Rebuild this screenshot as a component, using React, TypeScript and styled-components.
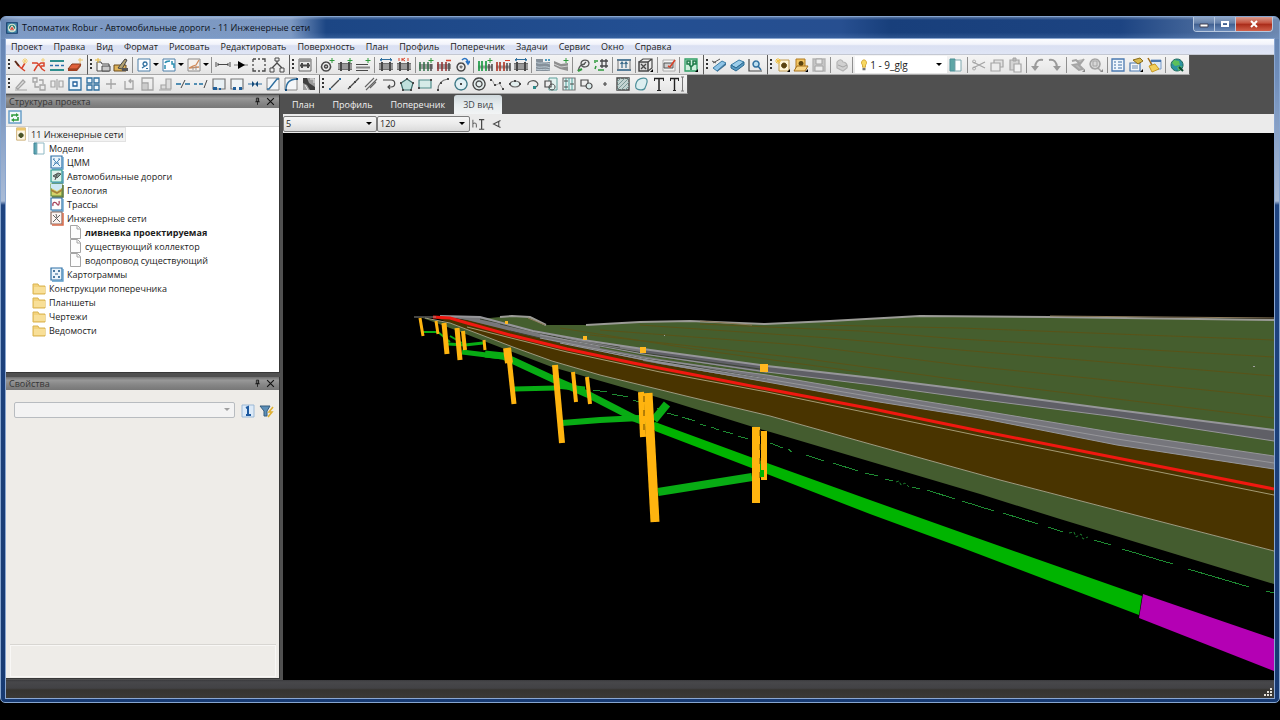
import React from 'react';
import styled, { createGlobalStyle } from 'styled-components';

const Global = createGlobalStyle`
  *, *::before, *::after { box-sizing: border-box; }
  html, body { margin: 0; background: #000; }
  body, button, select { font-family: "Open Sans", "Noto Sans", sans-serif; font-size: 9px; color: #1c1c1c; }
  button { border: 0; padding: 0; background: none; }
`;

/* ---------- icons: [path, stroke, fill, stroke width] on a 16px grid ---------- */

type Shape = [string, string?, string?, number?];

const K = '#484848';
const G = '#2f9a3c';
const B = '#2f6f9f';
const R = '#d8432a';
const D = '#a4a4a4';
const corner: Shape = ['M15 12v3h-3z', '', '#000'];
const gPlus: Shape = ['M13 1v5M10.5 3.5h5', G];
const road: Shape[] = [
  ['M1 7h14v5H1z', '', '#9a9a9a'],
  ['M1 6.5h14M1 12.5h14', '#707070'],
  ['M4 5v9M12 5v9', K, '', 2],
];

const icons: Record<string, Shape[]> = {
  surveyPoint: [['M4 7l4 4 4 3M9 11l3-5', R, '', 1.5], ['M2 4l4 5', '#5a2a1a', '', 2], ['M12 1v6M9 4h6M10 2l4 4M14 2l-4 4', '#f3d27a']],
  surveyLine: [['M1 6h5l3 3 2 3 3 2M3 14l3-5 4-3h3v3h-3', R, '', 1.5], ['M12 1v4M10 3h4', '#f3d27a']],
  layers: [['M1 4h14M1 13h14', '#2e8f8f', '', 2], ['M1 8.5h3M6 8.5h4M12 8.5h3', '#2c6fae', '', 1.5]],
  eraserRed: [['M1 12l4-5h9l-4 5z', '#8c3a1c', '#e0603a'], ['M1 12h9v2H1zM10 12l4-5v2l-4 5z', '', '#a04020'], ['M13 1v5M11 3h5', '#e9c46a']],
  importFile: [['M2 5h4l1 2h7v7H2z', K, '#f4f4f4'], ['M7 9h8v5H7z', K, '#c9c9c9'], ['M3 1v5M0 3h6', '#e6b93c']],
  editBox: [['M1 8h12v6H1z', '#6b4a1a', '#e0b45a'], ['M5 11l7-9 2 1-5 9z', K, '#b0a070'], ['M9 11h6v3H9z', '', '#555']],
  chartS: [['M2 2h12v12H2z', '#4c7fa8', '#fbfdff'], ['M9 5a2 2 0 1 0 .1 0M9 9l-3 2', B, '', 1.4], ['M10 11h2v1h-2z', '', B]],
  chartC: [['M2 2h12v12H2z', '#4c7fa8', '#fbfdff'], ['M4 12V8M4 6c1-2 3-2 5-2M11 4v3h2v4', '#2b8fb0', '', 1.5]],
  chartO: [['M2 2h12v12H2z', '#8a8a8a', '#f6f2ee'], ['M3 11l4-2 3-1 3-5M3 11l10-1', '#d08a5a', '', 1.3], ['M7 10v3M10 9v4', '#999']],
  span: [['M1 5v5M3 7.5h10M3 9V6M13 9V6M15 5v5', K]],
  arrowSolid: [['M1 8h14', '#777'], ['M5 4l7 4-7 4z', '', '#000']],
  selectBox: [['M2 2h3M7 2h2M11 2h3v3M14 7v2M14 11v3h-3M9 14H7M5 14H2v-3M2 9V7M2 5V2', K, '', 1.3]],
  tree: [['M8 2v4M8 6l-5 5M8 6l5 5', K, '', 1.3], ['M6 1h4v3H6zM1 11h4v4H1zM11 11h4v4h-4z', K, '#eee']],
  roadBox: [['M2 2h12v12H2z', '#666', '#e9e9e9'], ['M2 2h12v3H2z', '', '#999'], ['M5 6v5M11 6v5M3 8.5h10', K, '', 2]],
  circlePlus: [['M7 5a4.500 4.500 0 1 0 .1 0M7 8a1.500 1.500 0 1 0 .1 0', K, '', 1.5], gPlus],
  roadPlus: [...road, gPlus],
  linesPlus: [['M1 7.5h12M1 13.5h12', K, '', 1.2], ['M1 10.5h14', '#888', '', 2], gPlus],
  roadBlue: [...road, ['M3 2.5h10M4 1L2 3l2 1M12 1l2 2-2 1', B]],
  roadRed: [...road, ['M3 1v3M6 1v3M6 3l3-2M6 2l3 2M12 1v3', R]],
  roadGreen: [['M1 7h14v5H1z', '', '#9a9a9a'], ['M2 5v9M6 5v9M10 5v9', '#2d6e46', '', 1.5], ['M13 7v7', K, '', 1.5], gPlus],
  roadMinus: [['M1 7h14v5H1z', '', '#9a9a9a'], ['M2 5v9M6 5v9M10 5v9', '#8e2d2d', '', 1.5], ['M13 6v8', K, '', 1.5], ['M10 3.5h5', R, '', 1.5]],
  rotate: [['M7 6a4 4 0 1 0 .1 0', K, '', 1.5], ['M7 9a1 1 0 1 0 .1 0', K], ['M8 3c3-3 6-1 6 3M12 4l2 3 2-3', '#2a73c4', '', 1.6]],
  pinsGreen: [['M1 10h14', '#999', '', 3], ['M2 4v10M5 4v10M9 4v10', '#1d9a46', '', 1.7], ['M12 7v7M15 7v7', K, '', 1.5], gPlus],
  pinsRed: [['M1 10h14', '#999', '', 3], ['M2 5v9M5 5v9M9 5v9', '#b03d2d', '', 1.7], ['M12 6v8M15 6v8', K, '', 1.5], ['M10 3.5h5', R]],
  waveBox: [['M1 2h7v3h7v9H1z', '', '#85909a'], ['M1 5c4 3 8-1 14 2M1 9c4 3 8-1 14 2M1 12c4 2 8-1 14 1', '#bccad4'], ['M10 3h2M13 3h2', '#4c9ac0', '', 2]],
  waveBand: [['M1 4l7 3 7-1v8l-8-2-6-3z', '', '#8f8f8f'], ['M1 7l7 3 7-1', '#cfcfcf'], gPlus],
  loop: [['M9 10a4 3.500 0 1 1 5-4c0 4-4 4-5 4M8 8l3-3M3 14c1-5 4-7 7-7', '#555', '', 1.3], ['M3 14l4-2', G, '', 2]],
  bridge: [['M7 4h8M7 9h8M9 2v9M13 2v9', K, '', 1.3], ['M2 3v3M3 9l-1 3M5 13h6M3 4h2', G, '', 1.5]],
  sections: [['M1 3h14M1 13h14', '#245a80', '', 1.6], ['M2 3v10M14 3v10', '#777'], ['M6 11V6M10 11V6M4.500 7L6 5l1.500 2M8.500 7L10 5l1.500 2', '#3a6a8a', '', 1.2]],
  cube: [['M1 5h9v9H1z', K, '#d8d8d8', 1.5], ['M1 5l4-3h9v9l-4 3M10 5l4-3', K, '', 1.2], ['M3 7l5 5M8 7l-5 5', K, '', 1.3], corner],
  slide: [['M2 3h12v11H2z', '#aaa', '#f4f4f4'], ['M3 6h9v5H3z', '#555', '#cfcfcf'], ['M7 9l2 1 5-7', R, '', 1.6]],
  greenMap: [['M2 2h12v12H2z', '#2f9f66', '#cfeedd', 1.3], ['M4 4h3v3H4zM10 4h3v3h-3zM6 7l2 3 3-3M8 10v3', '#1e7a48', '', 1.5], corner],
  rule1: [['M2 11l9-7 4 2-9 8z', '#3b7fa8', '#8fc4e6'], ['M2 6l7-4M1 4l4 2', '#555'], ['M6 14l9-8v2l-9 7z', '', '#3b6f93']],
  rule2: [['M2 8l8-5 5 2-8 6z', '#3b7fa8', '#9ccdea'], ['M2 8v3l5 3 8-6V5l-8 6z', '#2c6a90', '#5a9bc4']],
  zoomAxis: [['M2 2v12h13', K, '', 1.2], ['M9 4a3 3 0 1 0 .1 0M11 9l3 4', B, '#bcdff0', 1.5]],
  newDoc: [['M4 3h10v11H4z', '#c09a50', '#fff6d8'], ['M9 6a2.500 2.500 0 1 0 .1 0', '#5a4310', '#5a4310'], ['M3 1v6M0 4h6M1 2l4 4M5 2L1 6', '#f0c040'], corner],
  openDoc: [['M3 2h9v9H3z', '#b07a20', '#f2c562'], ['M8 4a2.500 2.500 0 1 0 .1 0', '', '#5a4310'], ['M1 14l3-5h11l-3 5z', '#a56f18', '#f7d588'], corner],
  save: [['M2 2h12v12H2z', '#b4b4b4', '#c6c6c6', 1.3], ['M5 2h6v5H5zM4 9h8v5H4z', D, '#ececec']],
  printOff: [['M3 5c2-3 5-3 6 0 3 0 5 3 4 6l-4 3-6-3z', '#b4b4b4', '#d0d0d0', 1.2], ['M4 8l5 2 4-2', D]],
  panelTeal: [['M2 2h5v12H2z', '#4b8f96', '#5fa6a6'], ['M7 3h6v11H7z', '#7fa8ae', '#fff']],
  cut: [['M2 5l12 6M2 11l12-6', D, '', 1.3], ['M3 3a1.500 1.500 0 1 0 .1 0M3 10a1.500 1.500 0 1 0 .1 0', D]],
  copy: [['M5 3h9v7H5z', D, '#e2e2e2', 1.2], ['M2 6h9v8H2z', D, '#ececec', 1.2]],
  paste: [['M3 3h9v10H3z', D, '#d4d4d4', 1.2], ['M6 1h3v3H6z', D, '#bbb'], ['M7 7h7v8H7z', D, '#f2f2f2', 1.2]],
  undo: [['M14 3C9 2 6 5 6 11', '#9a9a9a', '', 2], ['M2 9h8l-4 5z', '', '#9a9a9a']],
  redo: [['M2 3c5-1 8 2 8 8', '#9a9a9a', '', 2], ['M6 9h8l-4 5z', '', '#9a9a9a']],
  brushOff: [['M2 4l4-1 4 4 4-5M3 8l5-1 5 5-4 1z', D, '#b8b8b8', 2], ['M15 12v3h-3z', '', '#888']],
  zoomOff: [['M7 2a5 5 0 1 0 .1 0M10 11l3 3', D, '#d8d8d8', 1.6], ['M5 4h4v5H5z', D], ['M15 12v3h-3z', '', '#888']],
  props: [['M2 2h12v12H2z', '#4a78b0', '#eef5fc', 1.3], ['M4 5h2M8 5h4M4 8h2M8 8h4M4 11h2M8 11h4', '#3c6ea5']],
  propsCard: [['M2 6h10v8H2z', '#4a78b0', '#f4f8fc', 1.2], ['M4 9h6M4 11h6', '#6a8ab0'], ['M5 3l7-2 3 3-5 3z', '#8a6c18', '#d8b94e'], corner],
  broom: [['M5 3h10v9H5z', '#7a9cc8', '#dbe8f6'], ['M5 3h10v2H5z', '', '#4a78b0'], ['M2 1l4 7', '#a06a18', '', 1.5], ['M3 9l6-2 4 5-7 3z', '#c79a24', '#f2cf5a']],
  globe: [['M8 2a6 6 0 1 0 .1 0', '#1d6a5a', '#2c93a0'], ['M5 3l5 1 1 4-5 1-3-3zM8 10l5-1-3 5z', '', '#5cc05a'], ['M10 10l4 4', '#0c4a30', '', 2]],

  pencilOff: [['M3 12l7-8 2 2-7 7zM2 14h12', D, '#ddd', 1.2]],
  copyGrey: [['M2 2h4v4H2zM9 9h5v5H9zM4 7v4h4M8 4h4v4', D, '', 1.3]],
  mirrorOff: [['M2 5h4v6H2zM10 5h4v6h-4zM8 3v11', D, '', 1.2]],
  offsetSq: [['M2 2h12v12H2z', B, '#eaf4fb', 1.3], ['M6 6h4v4H6z', '#1f5f9a', '#fff', 1.3]],
  array: [['M2 2h5v5H2zM9 2h5v5H9zM2 9h5v5H2zM9 9h5v5H9z', B, '#eef6fb', 1.3]],
  moveOff: [['M8 3v10M3 8h10', D, '', 1.3]],
  rotateOff: [['M4 5v8h8V5H8M10 3L8 5l2 2', D, '', 1.3]],
  scaleOff: [['M3 2h11v12H3zM3 7h6v7', D, '', 1.3], ['M4 8h4v5H4z', '', '#ccc']],
  stretchOff: [['M9 3h5v10H9zM4 9h5v4H4z', D, '#ddd', 1.2], ['M2 14h12', D]],
  trim: [['M1 8h5M10 8h5', '#1f6fa0', '', 1.3], ['M6 12l4-8', K]],
  extend: [['M1 8h3M6 8h4', '#1f6fa0', '', 1.3], ['M11 12l3-8', K]],
  fillBox: [['M2 3h12v10H2z', '#777', '#e8f0f4', 1.2], ['M2 11h4v3H2zM8 12h2v2H8z', '', '#1f5f9a']],
  breakBox: [['M4 13H2V3h12v10h-2', '#777', '#eef4f6', 1.2], ['M4 11h3v3H4zM10 11h3v3h-3z', '', '#1f5f9a']],
  join: [['M1 8h5M15 8h-5', B, '', 1.2], ['M5 5l3 3-3 3zM11 5L8 8l3 3z', '', '#134a7a']],
  chamfer: [['M2 2h12v12H2z', '#888', '#f4f6f8'], ['M2 13h2l8-10h2', B, '', 1.4]],
  fillet: [['M2 2h12v12H2z', '#888', '#f4f6f8'], ['M3 14C3 7 7 3 14 3', B, '', 1.4], ['M2 13h2v2H2zM13 2h2v2h-2z', '', '#134a7a']],
  explode: [['M2 2h12v12H2z', '', '#9c9c9c'], ['M2 2h4l2 5 6 4v3H9L6 9 2 7z', '', '#3f3f3f'], ['M9 3h4v4M4 9l3 5', '#e8e8e8']],
  line: [['M4 12L12 4', K, '', 1.2], ['M2 12h2v2H2zM12 2h2v2h-2z', '', B]],
  ray: [['M3 13L14 2', K, '', 1.2], ['M4 10h2v2H4zM9 5h2v2H9z', '', K]],
  dline: [['M2 11l9-9M3 14L14 3M7 12l6-6', '#666', '', 1.1]],
  pline: [['M2 4h8c5 0 5 7 0 7H7M9 9l-2 2 2 2', K, '', 1.2]],
  polygon: [['M8 3l6 4-2 7H4L2 7z', '#3a6a68', '#bfe0dc', 1.2], ['M7 2h2v2H7zM1 6h2v2H1zM13 6h2v2h-2zM3 13h2v2H3zM11 13h2v2h-2z', '', K]],
  rect: [['M2 4h12v8H2z', '#4f8a88', '#d5ebe8', 1.2], ['M13 3h2v2h-2zM1 11h2v2H1z', '', K]],
  arc: [['M3 14C3 8 7 4 13 3', '#777', '', 1.1], ['M2 13h2v2H2zM5 6h2v2H5zM12 2h2v2h-2z', '', K]],
  circleDot: [['M8 2a6 6 0 1 0 .1 0', '#3f7a88', '#e2f0f4', 1.3], ['M7 7h2v2H7z', '', K]],
  ring: [['M8 2a6 6 0 1 0 .1 0M8 5a3 3 0 1 0 .1 0', K, '#e4eeee', 1.3]],
  spline: [['M2 4c3 0 2 6 5 5s3-3 5 1l2 3', '#999'], ['M1 3h2v2H1zM5 8h2v2H5zM10 6h2v2h-2zM13 12h2v2h-2z', '', K]],
  ellipse: [['M8 5a5 3 0 1 0 .1 0', '#666', '#e2eeee', 1.2], ['M7 4h2v2H7zM2 7h2v2H2zM12 7h2v2h-2z', '', K]],
  ellArc: [['M3 9a5 3.500 0 1 1 8 2', '#555', '', 1.2], ['M8 10h3v3H8z', '', '#2d8a8a']],
  block: [['M6 2h8v12H6z', '#5d9f9a', '#e3f2ef'], ['M2 5h6v6H2z', K, '#eee', 1.2], ['M9 8a3 3 0 1 0 .1 0', K]],
  fence: [['M2 2h12v12H2z', '#777', '#e6f0f0', 1.2], ['M5 2v12M8 2v12M11 2v12', '#4d9f9a'], ['M3 5h4M9 8h4M3 11h4', K]],
  blockIn: [['M2 4h7v6H2z', K, '#eee', 1.2], ['M10 7a3 3 0 1 0 .1 0', K, '#dcecec', 1.2]],
  point: [['M8 6v4M6 8h4', K, '', 1.2]],
  hatch: [['M2 2h12v12H2z', K, '#c4d4d2', 1.4], ['M2 6l4-4M2 10l8-8M2 14L14 2M6 14l8-8M10 14l4-4', '#7a9a98']],
  region: [['M5 4c3-2 8-3 9 0s-1 5-2 8-8 2-9 0 0-6 2-8z', '#4d8f9a', '#dceef0', 1.2]],
  text: [['M3 2.500h10M8 3v11', '#222', '', 1.5], ['M3.500 2v3M12.500 2v3M6 14.500h4', '#222']],
  mtext: [['M1 2.500h9M5.500 3v11', '#222', '', 1.4], ['M1.500 2v3M9.500 2v3M4 14.500h3', '#222'], ['M13.500 1v14M12 1h3M12 15h3', '#777']],

  refresh: [['M2 2h12v12H2z', '#6a9fc8', '#f2f8fc', 1.5], ['M5 8V6h5M11 8v3H6', G, '', 1.6], ['M9 4l3 2-3 2zM7 9l-3 2 3 2z', '', G]],
  project: [['M3 1h10v14H3z', '#c9a86a', '#fdf6e4'], ['M3 1h10v3H3z', '', '#ecc66c'], ['M8 7a2.500 2.500 0 1 0 .1 0', '#39441c', '#4c5526']],
  models: [['M3 3h3v11H3z', '#3f8394', '#5da7b4'], ['M6 3h7v11H6z', '#8fb9c4', '#fff']],
  dtm: [['M2 2h11v12H2z', '#2d6fa5', '#eaf4fb', 1.2], ['M14 3v12H3', '#5b9bc8', '', 1.3], ['M4 5l7 7M11 5l-7 7M4 5h2M9 5h2M5 9h5', '#4c88b8']],
  roads: [['M2 2h11v12H2z', '#2b9a8c', '#dff2ec', 1.2], ['M14 3v12H3', '#3f8fb0', '', 1.3], ['M4 8l5-3 3 1-4 4zM6 12l2-6', '#555', '#7f9a90']],
  geology: [['M2 2h11v12H2z', '#5a8f40', '#d7d26a', 1.2], ['M2 2h11v4L8 9 2 6z', '', '#cfe8f4'], ['M2 7l6 3 5-3v2l-5 3-6-3z', '', '#a5803a'], ['M14 3v12H3', '#5a7030', '', 1.5]],
  routes: [['M2 2h11v12H2z', '#2d6fa5', '#fdfdfd', 1.2], ['M14 3v12H3', '#5b9bc8', '', 1.3], ['M4 10c-1-5 3-4 4-2s3 1 2-3', '#a5425a', '', 1.3]],
  networks: [['M2 2h11v12H2z', '#8a6a60', '#fbf4f2', 1.2], ['M14 3v12H3', '#d76a4a', '', 1.5], ['M4 5l7 7M11 5l-7 7M7 4l1 4', '#666']],
  cartogram: [['M2 2h11v12H2z', '#2d6fa5', '#eaf4fb', 1.2], ['M14 3v12H3', '#5b9bc8', '', 1.3], ['M4 5h2M5 4v2M9 5h2M10 4v2M4 11h2M9 11h2M6 8h3M5 10v2M10 10v2', '#245a8a', '', 1.2]],
  page: [['M3.500 1.500h7l3 3v10h-10z', '#a5a5a5', '#fdfdfd'], ['M10 2v3h3', '#a5a5a5']],
  folder: [['M2 4h5l1 2h6v8H2z', '#d9b350', '#f3d27c'], ['M3 7h11v6H3z', '', '#f8df98']],
  one: [['M2 2h12v12H2z', '#9cb8d4', '#dceaf8'], ['M6 5l2-1v8M6 12h5', '#1e5aa0', '', 2]],
  filter: [['M2 3h10L9 8v5H6V8z', '#355c7d', '#5c8fb8'], ['M15 4l-4 5h3l-4 5', '#e0b030', '', 1.6]],
  height: [['M1 3v9M1 8c2-2 4-1 4 1v3', '#666', '', 1.2], ['M11 3v11M8 3h6M8 14h6', K, '', 1.4]],
  angle: [['M12 4L4 8l8 4M10 5v6', K, '', 1.2]],
  pin: [['M6 2h4v6H6zM4 8.500h8M8 9v5M9 2v6', '#111', '', 1.4]],
  cross: [['M2 2l12 12M14 2L2 14', '#111', '', 2]],
  bulb: [['M8 1a4 4 0 0 0-2 7v3h4V8a4 4 0 0 0-2-7z', '#c99a20', '#f8d860'], ['M6 12h4v3H6z', '', '#777']],
  app: [['M1 1h14v14H1z', '#123a68', '#4a90b0', 1.5], ['M8 3a5 5 0 1 0 .1 0', '#d8e8d0', '#2a7c70', 1.4], ['M8 5l4 6H4z', '#fff', '#d8503a']],
};

const Svg = styled.svg<{ $size: number }>`
  display: block;
  flex: none;
  width: ${(p) => p.$size}px;
  height: ${(p) => p.$size}px;
`;

function Icon({ name, size = 16 }: { name: string; size?: number }) {
  return (
    <Svg $size={size} viewBox="0 0 16 16" aria-hidden="true">
      {icons[name].map(([d, s, f, w], i) => (
        <path key={i} d={d} stroke={s || 'none'} fill={f || 'none'} strokeWidth={w ?? 1} />
      ))}
    </Svg>
  );
}

/* ---------- window frame ---------- */

const Desktop = styled.div`
  height: 100vh;
  min-height: 480px;
  padding: 16px 0 17px;
  background: #000;
  display: flex;
`;
const Frame = styled.div`
  flex: 1;
  min-width: 0;
  display: flex;
  flex-direction: column;
  padding: 0 5px 4px;
  border: 1px solid #86a5cf;
  border-radius: 6px 6px 5px 5px;
  background: linear-gradient(180deg, #5f7fae 0, #6f8dba 60px, #a9bbd6 184px, #1f4480 188px, #173a72 100%);
`;
const TitleBar = styled.header`
  height: 22px;
  flex: none;
  margin: 0 -5px;
  padding: 0 6px 0 5px;
  display: flex;
  align-items: center;
  gap: 4px;
  border-radius: 5px 5px 0 0;
  background:
    linear-gradient(180deg, rgba(255, 255, 255, .28) 0, rgba(255, 255, 255, 0) 3px, rgba(0, 0, 0, 0) 70%, rgba(120, 160, 210, .25)),
    linear-gradient(90deg, #6684b0 0, #7e9ac4 20px, #7c98c2 290px, #1c4684 325px, #234f92 640px, #274f90 840px, #183f7b 890px, #1d4482 1120px, #3c5f95 1180px, #6d88b0);
`;
const Title = styled.h1`
  margin: 0;
  flex: 1;
  font-size: 9px;
  line-height: 14px;
  font-weight: 400;
  color: #0c1220;
  white-space: nowrap;
`;
const Caption = styled.div`
  display: flex;
  align-self: flex-start;
  border: 1px solid #b8c8de;
  border-top: 0;
  border-radius: 0 0 4px 4px;
  overflow: hidden;
`;
const CaptionButton = styled.button<{ $close?: boolean }>`
  width: ${(p) => (p.$close ? 36 : 21)}px;
  height: 14px;
  display: grid;
  place-items: center;
  border-right: ${(p) => (p.$close ? '0' : '1px solid #b8c8de')};
  background: ${(p) =>
    p.$close
      ? 'linear-gradient(#d99a8c, #c4503c 45%, #a82a18 50%, #d0604a)'
      : 'linear-gradient(#8ea6c6, #6581aa 45%, #3f5f90 50%, #6a8ab8)'};
`;
const Client = styled.div`
  flex: 1;
  min-height: 0;
  display: flex;
  flex-direction: column;
  background: #505050;
  box-shadow: 0 0 0 1px #8aa6d0;
`;
const Menu = styled.nav`
  height: 16px;
  flex: none;
  display: flex;
  align-items: center;
  padding-left: 5px;
  gap: 11px;
  background: linear-gradient(#fcfdff 0, #f2f4fb 35%, #dae0f2 45%, #dfe5f5);
  border-bottom: 1px solid #c4c8d2;
`;
const MenuItem = styled.button`
  line-height: 14px;
  white-space: nowrap;
`;

/* ---------- toolbars ---------- */

const ToolRow = styled.div`
  height: 20px;
  flex: none;
  display: flex;
  overflow: hidden;
  & + & { height: 19px; }
`;
const ToolGroup = styled.div<{ $width: number }>`
  flex: none;
  width: ${(p) => p.$width}px;
  display: flex;
  align-items: center;
  padding-right: 3px;
  background: linear-gradient(#f4f4f4, #ececec 60%, #e4e4e4);
  border-right: 1px solid #5c5c5c;
  border-bottom: 1px solid #a8a8a8;
`;
const Grip = styled.i`
  flex: none;
  width: 2px;
  height: 12px;
  margin: 0 2px;
  background: repeating-linear-gradient(#333 0 2px, transparent 2px 4px);
`;
const Tool = styled.button`
  flex: none;
  width: 18px;
  height: 18px;
  display: grid;
  place-items: center;
`;
const Drop = styled.button`
  flex: none;
  width: 7px;
  height: 18px;
  display: grid;
  place-items: center;
`;
const Caret = styled.i<{ $pale?: boolean }>`
  border: 3px solid transparent;
  border-top-color: ${(p) => (p.$pale ? '#a0a0a0' : '#000')};
  border-bottom: 0;
`;
const Split = styled.i`
  flex: 1 1 0;
  display: flex;
  justify-content: center;
  height: 16px;
  &::before { content: ''; width: 1px; background: #8f8f8f; }
`;
const Combo = styled.span<{ $width: number; $plain?: boolean; $pale?: boolean }>`
  flex: 0 1 ${(p) => p.$width}px;
  height: ${(p) => (p.$plain ? 17 : 16)}px;
  display: flex;
  align-items: center;
  padding: 0 4px 0 2px;
  background: ${(p) => (p.$plain ? '#fff' : p.$pale ? '#f3f3f3' : 'linear-gradient(#f6f6f6, #ebebeb 50%, #dadada)')};
  border: 1px solid ${(p) => (p.$plain ? '#fff' : p.$pale ? '#b8bcc0' : '#7c7c7c')};
  border-radius: ${(p) => (p.$plain ? 0 : 2)}px;
`;
const Select = styled.select<{ $large?: boolean }>`
  flex: 1;
  min-width: 0;
  appearance: none;
  border: 0;
  padding: 0;
  background: transparent;
  font-size: ${(p) => (p.$large ? 10 : 9)}px;
  line-height: 14px;
  outline: none;
  opacity: 1;
`;

function Tools({ items, width, children }: { items: string; width: number; children?: React.ReactNode }) {
  return (
    <ToolGroup $width={width} role="toolbar">
      <Grip />
      {items.split(' ').map((n, i) => {
        if (n === '|') return <Split key={i} />;
        if (n === 'v') return <Drop key={i} aria-label="list"><Caret /></Drop>;
        if (n === '*') return <React.Fragment key={i}>{children}</React.Fragment>;
        return <Tool key={i} aria-label={n}><Icon name={n} /></Tool>;
      })}
    </ToolGroup>
  );
}

/* ---------- left dock ---------- */

const Body = styled.div`
  flex: 1;
  min-height: 0;
  display: grid;
  grid-template-columns: 274px 1fr;
  column-gap: 3px;
`;
const Dock = styled.aside`
  display: flex;
  flex-direction: column;
  gap: 4px;
  padding: 1px 0;
  min-height: 0;
`;
const Panel = styled.section<{ $grow: number }>`
  flex: ${(p) => p.$grow} 1 0;
  min-height: 0;
  display: flex;
  flex-direction: column;
  border: 1px solid #383838;
  border-width: 0 1px 1px 0;
  overflow: hidden;
`;
const PanelHead = styled.div`
  flex: none;
  height: 13px;
  display: flex;
  align-items: center;
  gap: 4px;
  padding: 0 4px 0 3px;
  background: linear-gradient(#6f6f6f, #989898 25%, #868686 60%, #777);
`;
const PanelTitle = styled.h2`
  flex: 1;
  margin: 0;
  font-size: 9px;
  line-height: 13px;
  font-weight: 400;
  color: #363636;
`;
const HeadButton = styled.button`
  width: 9px;
  height: 9px;
`;
const PanelTools = styled.div`
  flex: none;
  height: 19px;
  display: flex;
  align-items: center;
  background: #ededed;
  border-bottom: 1px solid #cfcfcf;
`;
const Tree = styled.ul`
  flex: 1;
  margin: 0;
  padding: 0;
  list-style: none;
  background: #fff;
`;
const Node = styled.li<{ $level: number; $bold?: boolean }>`
  height: 14px;
  display: flex;
  align-items: center;
  padding-left: ${(p) => 7 + p.$level * 18}px;
  font-size: 9px;
  line-height: 13px;
  font-weight: ${(p) => (p.$bold ? 700 : 400)};
  white-space: nowrap;
`;
const NodeText = styled.span<{ $selected?: boolean }>`
  padding: 0 2px;
  background: ${(p) => (p.$selected ? '#f2f2f2' : 'transparent')};
  box-shadow: ${(p) => (p.$selected ? '0 0 0 1px #e2e2e2' : 'none')};
`;
const NodeIcon = styled.span`
  width: 16px;
  display: grid;
  place-items: center;
`;
const Props = styled.div`
  flex: 1;
  display: flex;
  flex-direction: column;
  background: #eeece8;
`;
const PropsTop = styled.div`
  flex: 1;
  display: flex;
  align-items: flex-start;
  gap: 4px;
  padding: 12px 3px 0 8px;
`;
const PropsButtons = styled.div`
  display: flex;
`;
const PropsNote = styled.div`
  height: 32px;
  margin: 0 3px 1px 4px;
  border: 1px solid #f8f7f5;
  box-shadow: 0 -1px 0 #d8d6d2;
`;

/* ---------- view area ---------- */

const View = styled.main`
  display: flex;
  flex-direction: column;
  min-width: 0;
  min-height: 0;
`;
const Tabs = styled.div`
  flex: none;
  height: 20px;
  display: flex;
  align-items: flex-end;
`;
const Tab = styled.button<{ $active?: boolean }>`
  height: 19px;
  padding: 0 9px;
  line-height: 18px;
  white-space: nowrap;
  color: ${(p) => (p.$active ? '#3d4348' : '#f0f0f0')};
  background: ${(p) => (p.$active ? 'linear-gradient(#cfd8dc, #e6ecee 50%, #f2f4f5)' : 'transparent')};
  border-radius: 3px 3px 0 0;
`;
const ViewTools = styled.div`
  flex: none;
  height: 19px;
  display: flex;
  align-items: center;
  background: #ebebeb;
`;
const Canvas = styled.div`
  flex: 1;
  min-height: 0;
  background: #000;
`;
const SceneSvg = styled.svg`
  display: block;
  width: 100%;
  height: 100%;
`;
const Status = styled.footer`
  flex: none;
  height: 18px;
  display: flex;
  align-items: flex-end;
  justify-content: flex-end;
  padding: 1px;
  background: linear-gradient(#3a3a3d 0, #47474a 2px, #424245 45%, #363430 55%, #3b3936);
`;

const columns: [string, number][] = [
  ['M420 318L423 336', 3], ['M436 321L438 334', 3], ['M444 323L447 354', 5], ['M457 328L460 360', 5],
  ['M463 331L465 350', 4], ['M484 340L485 350', 3], ['M507 348L509 363', 8], ['M508 348L514 404', 5],
  ['M555 365L562 443', 6], ['M573 372L576 402', 4], ['M587 377L590 404', 4], ['M641 392L643 437', 6],
  ['M648 393L655 522', 9], ['M764 431L764 480', 6], ['M756 427L756 503', 8],
];
const contours = [
  'M820 325L960 328L1274 340', 'M700 324L860 331L960 339L1274 357', 'M640 325L830 338L960 350L1274 376',
  'M600 330L800 345L960 365L1274 397', 'M590 335L800 358L960 380L1274 418', 'M560 328L700 350L860 372',
];
const dashes = `M593 390L607 392M612 394L628 397M633 400L652 406M657 408L662 410M667 413L678 416M682 417L695 421M700 424L706 426
M711 427L719 430M723 431L733 434M738 436L748 439M770 443L783 448M788 449L792 452M806 455L824 461M833 463L858 471
M865 473L878 476M885 479L893 481M912 487L920 489M927 490L955 499M962 501L994 511M1003 513L1038 524M1048 527L1063 532
M1094 540L1111 545M1122 549L1173 564M1188 569L1249 587M1266 591L1274 593`;

function Scene() {
  return (
    <SceneSvg viewBox="283 133 991 547" preserveAspectRatio="xMidYMid slice" role="img" aria-label="3D">
      <path fill="#455e2e" d="M455 317L490 318L510 316L532 317L545 325L586 325L640 322L690 321L765 324L830 321L920 316L1274 319V480L690 380L520 335z" />
      <g fill="none" stroke="#5a5318" strokeWidth="1">{contours.map((d) => <path key={d} d={d} />)}</g>
      <path fill="none" stroke="#9b9b96" strokeWidth="2" d="M500 317L512 316L530 317L538 321L546 325M586 325L640 322L690 321L765 324L830 321L920 316L1050 317L1274 320" />
      <path fill="none" stroke="#8d7b5c" strokeWidth="1" d="M528 318L545 325M700 321L752 325M1050 316L1274 318" />
      <path fill="#493400" d="M433 317L467 320L560 342L660 363L767 382L873 401L980 418L1117 445L1274 469V551L1000 480L870 444L770 416L690 397L600 375L552 361L513 347L450 323z" />
      <path fill="#445c2f" d="M420 317L450 323L513 347L552 361L600 375L690 397L770 416L870 444L1000 480L1274 551V584L1060 519L980 494L750 426L660 398L552 367L502 348L450 328z" />
      <path fill="none" stroke="#a09c80" strokeWidth="1" d="M425 318L450 323L513 347L552 361L600 375L690 397L770 416L870 444L1000 480L1274 551" />
      <path fill="#77777a" d="M440 316L480 317L533 331L583 340L643 349L700 358L767 367L767 382L660 364L560 343L467 320z" />
      <path fill="#5f5f66" d="M643 349L767 366L873 378L960 389L1117 410L1274 430V441L1117 417L960 397L873 385L767 372L643 354z" />
      <path fill="#76767c" d="M643 358L767 375L873 393L960 407L1117 433L1274 456V469L1117 445L980 418L873 401L767 382L643 361z" />
      <path fill="none" stroke="#455e2e" strokeWidth="2" d="M600 347L660 358L767 374" />
      <path fill="none" stroke="#3c4434" strokeWidth="1" d="M500 324L583 343L643 353L767 370M510 331L583 348L660 361L767 379M480 319L560 336L620 347" />
      <g fill="none" stroke="#96969a" strokeWidth="1">
        <path d="M440 316L480 317L533 331L583 340L643 349L767 366L873 378L960 389L1117 410L1274 430" strokeWidth="2" />
        <path d="M540 335L643 354L767 372L873 385L960 397L1117 417L1274 441" />
        <path d="M540 338L643 358L767 375L873 393L960 407L1117 433L1274 456" />
        <path d="M640 359L767 379L873 397L960 412L1117 439L1274 463" />
        <path d="M560 343L660 363L767 382L873 401L980 418L1117 445L1274 469" />
      </g>
      <path fill="none" stroke="#a39a72" strokeWidth="1" d="M467 327L567 352L660 372L767 392L980 436L1274 495" />
      <path fill="none" stroke="#f01810" strokeWidth="3" d="M433 317L450 318L467 323L510 335L567 349L633 363L690 374L767 389L873 409L980 431L1117 458L1274 489" />
      <path fill="none" stroke="#8a8a86" strokeWidth="1" d="M414 317H436" />
      <path fill="none" stroke="#1e8a32" strokeWidth="1" shapeRendering="crispEdges" d={dashes} />
      <path fill="none" stroke="#1a7a2c" strokeWidth="1" strokeDasharray="3 2" d="M896 482l3-1 2 4 4-2 4 4M1069 533l5-1 2 5 5-3 2 5 5-2" />
      <g fill="none" stroke="#08ac14">
        <path strokeWidth="2" d="M423 332L438 332M438 332L450 342M450 336L462 343" />
        <path strokeWidth="3" d="M448 344L465 345L483 343" />
        <path strokeWidth="5" d="M462 352L503 357" />
        <path strokeWidth="7" d="M485 354L503 356L514 361L555 380L587 394L634 418L662 429" />
        <path strokeWidth="5" d="M514 389L556 388M556 386L585 389" />
        <path strokeWidth="6" d="M562 423L600 420L640 418" />
        <path strokeWidth="8" d="M654 420L667 404" />
        <path strokeWidth="8" d="M658 492L752 477" />
      </g>
      <path fill="#00b400" d="M655 422L767 463L870 500L960 532L1142 596L1139 615L960 547L870 514L767 474L655 431z" />
      <path fill="#b400b4" d="M1143 594L1274 639V671L1139 618z" />
      <g fill="none" stroke="#ffb40f">{columns.map(([d, w]) => <path key={d} d={d} strokeWidth={w} />)}</g>
      <path fill="none" stroke="#6b4b00" strokeWidth="1" strokeDasharray="6 8" d="M644 396V430M760 430V478" />
      <path fill="#00b400" d="M760 470h4v7h-4z" />
      <path fill="#ffb820" d="M505 321h3v3h-3zM583 336h4v4h-4zM640 347h6v6h-6zM760 364h8v8h-8z" />
      <path fill="#a0a0a0" d="M664 335h1v1h-1zM1253 366h2v1h-2z" />
    </SceneSvg>
  );
}

/* ---------- application ---------- */

const menu = ['Проект', 'Правка', 'Вид', 'Формат', 'Рисовать', 'Редактировать', 'Поверхность', 'План', 'Профиль', 'Поперечник', 'Задачи', 'Сервис', 'Окно', 'Справка'];
const nodes: [number, string, string][] = [
  [0, 'project', '11 Инженерные сети'],
  [1, 'models', 'Модели'],
  [2, 'dtm', 'ЦММ'],
  [2, 'roads', 'Автомобильные дороги'],
  [2, 'geology', 'Геология'],
  [2, 'routes', 'Трассы'],
  [2, 'networks', 'Инженерные сети'],
  [3, 'page', 'ливневка проектируемая'],
  [3, 'page', 'существующий коллектор'],
  [3, 'page', 'водопровод существующий'],
  [2, 'cartogram', 'Картограммы'],
  [1, 'folder', 'Конструкции поперечника'],
  [1, 'folder', 'Планшеты'],
  [1, 'folder', 'Чертежи'],
  [1, 'folder', 'Ведомости'],
];

function Head({ title }: { title: string }) {
  return (
    <PanelHead>
      <PanelTitle>{title}</PanelTitle>
      <HeadButton aria-label="pin"><Icon name="pin" size={9} /></HeadButton>
      <HeadButton aria-label="close"><Icon name="cross" size={9} /></HeadButton>
    </PanelHead>
  );
}

export default function App() {
  return (
    <>
      <Global />
      <Desktop>
        <Frame>
          <TitleBar>
            <Icon name="app" size={12} />
            <Title>Топоматик Robur - Автомобильные дороги - 11 Инженерные сети</Title>
            <Caption>
              <CaptionButton aria-label="minimize">
                <Svg $size={10} viewBox="0 0 10 10"><path d="M1 5h8v3H1z" fill="#fff" stroke="#445" strokeWidth="1" /></Svg>
              </CaptionButton>
              <CaptionButton aria-label="maximize">
                <Svg $size={10} viewBox="0 0 10 10"><path d="M2 3h6v4H2z" fill="none" stroke="#fff" strokeWidth="2" /></Svg>
              </CaptionButton>
              <CaptionButton $close aria-label="close">
                <Svg $size={10} viewBox="0 0 10 10"><path d="M2 2l6 6M8 2L2 8" stroke="#fff" strokeWidth="2" /></Svg>
              </CaptionButton>
            </Caption>
          </TitleBar>
          <Client>
            <Menu>{menu.map((m) => <MenuItem key={m}>{m}</MenuItem>)}</Menu>
            <ToolRow>
              <Tools width={82} items="surveyPoint surveyLine layers eraserRed" />
              <Tools width={202} items="importFile editBox | chartS v chartC v chartO v | span arrowSolid selectBox tree" />
              <Tools width={414} items="roadBox | circlePlus roadPlus linesPlus | roadBlue roadRed | roadGreen roadMinus rotate | pinsGreen pinsRed roadBlue | waveBox waveBand | loop bridge | sections | cube | slide | greenMap" />
              <Tools width={64} items="rule1 rule2 zoomAxis" />
              <Tools width={422} items="newDoc openDoc save | printOff | * panelTeal | cut copy paste | undo redo | brushOff zoomOff | props propsCard broom | globe">
                <Combo $width={92} $plain>
                  <Icon name="bulb" size={12} />
                  <Select $large aria-label="layer" defaultValue="1 - 9_glg"><option>1 - 9_glg</option></Select>
                  <Caret />
                </Combo>
              </Tools>
            </ToolRow>
            <ToolRow>
              <Tools width={314} items="pencilOff copyGrey mirrorOff offsetSq array moveOff rotateOff scaleOff stretchOff trim extend fillBox breakBox join chamfer fillet explode" />
              <Tools width={368} items="line ray dline pline polygon rect arc circleDot ring spline ellipse ellArc block fence blockIn point hatch region text mtext" />
            </ToolRow>
            <Body>
              <Dock>
                <Panel $grow={278}>
                  <Head title="Структура проекта" />
                  <PanelTools><Tool aria-label="refresh"><Icon name="refresh" /></Tool></PanelTools>
                  <Tree>
                    {nodes.map(([level, icon, text], i) => (
                      <Node key={text} $level={level} $bold={i === 7}>
                        <NodeIcon><Icon name={icon} size={level === 0 ? 14 : 16} /></NodeIcon>
                        <NodeText $selected={i === 0}>{text}</NodeText>
                      </Node>
                    ))}
                  </Tree>
                </Panel>
                <Panel $grow={303}>
                  <Head title="Свойства" />
                  <Props>
                    <PropsTop>
                      <Combo $width={221} $pale>
                        <Select aria-label="object" disabled />
                        <Caret $pale />
                      </Combo>
                      <PropsButtons>
                        <Tool aria-label="single"><Icon name="one" /></Tool>
                        <Tool aria-label="filter"><Icon name="filter" /></Tool>
                      </PropsButtons>
                    </PropsTop>
                    <PropsNote />
                  </Props>
                </Panel>
              </Dock>
              <View>
                <Tabs role="tablist">
                  <Tab role="tab">План</Tab>
                  <Tab role="tab">Профиль</Tab>
                  <Tab role="tab">Поперечник</Tab>
                  <Tab role="tab" $active>3D вид</Tab>
                </Tabs>
                <ViewTools>
                  <Combo $width={94}>
                    <Select aria-label="step" defaultValue="5"><option>5</option></Select>
                    <Caret />
                  </Combo>
                  <Combo $width={93}>
                    <Select aria-label="field" defaultValue="120"><option>120</option></Select>
                    <Caret />
                  </Combo>
                  <Tool aria-label="height"><Icon name="height" size={14} /></Tool>
                  <Tool aria-label="angle"><Icon name="angle" size={14} /></Tool>
                </ViewTools>
                <Canvas><Scene /></Canvas>
              </View>
            </Body>
            <Status>
              <Svg $size={10} viewBox="0 0 10 10" aria-hidden="true">
                <path d="M7 1h2v2H7zM4 4h2v2H4zM7 4h2v2H7zM1 7h2v2H1zM4 7h2v2H4zM7 7h2v2H7z" fill="#e4e0d8" />
              </Svg>
            </Status>
          </Client>
        </Frame>
      </Desktop>
    </>
  );
}
